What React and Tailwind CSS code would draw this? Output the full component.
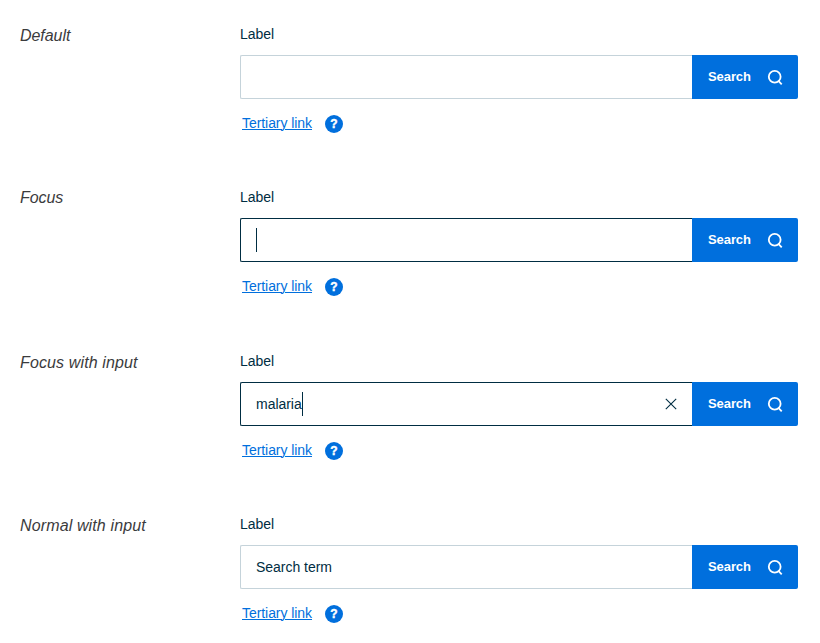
function Row({ title, value, focus, clear, h, titleClass }) {
  return (
    <section className={`flex ${h}`}>
      <h2 className={`w-[220px] shrink-0 text-[16px] leading-[20px] italic text-[#3b3b3d] ${titleClass}`}>{title}</h2>
      <div className="w-[558px]">
        <label className="block h-[30px] text-[14px] leading-[18px] tracking-[-0.05px] text-[#002d42]">Label</label>
        <div className="flex h-[44px]">
          <div className={`flex flex-1 items-center rounded-l-[2px] border border-r-0 pl-[15px] text-[14px] text-[#002d42] ${focus ? "border-[#002d42]" : "border-[#c5d3da]"}`}>
            <span className="tracking-[-0.03px]">{value}</span>
            {focus && <span className="h-6 w-px bg-[#002d42]" />}
            {clear && (
              <svg className="mr-[15px] ml-auto" width="12" height="12" viewBox="0 0 12 12" stroke="#002d42" strokeWidth="1.1">
                <path d="M.8.8 11.2 11.2M11.2.8.8 11.2" />
              </svg>
            )}
          </div>
          <button className="flex w-[106px] items-center rounded-r-[2px] bg-[#006fdd] pl-4 text-[13px] font-bold text-white">
            <span className="w-[59px] text-left tracking-[-0.08px]">Search</span>
            <svg width="18" height="18" viewBox="0 0 18 18" fill="none" stroke="white" strokeWidth="1.8">
              <circle cx="7.7" cy="8.7" r="5.9" />
              <path d="m11.2 12.6 3.5 3.7" />
            </svg>
          </button>
        </div>
        <div className="flex pt-4 pl-[2px]">
          <a className="-mt-px w-[83px] text-[14px] leading-[18px] tracking-[-0.06px] text-[#006fdd] underline decoration-1 underline-offset-1">Tertiary link</a>
          <span className="flex size-[18px] items-center justify-center rounded-full bg-[#006fdd]">
            <span className="text-[12px] leading-[18px] font-bold text-white [-webkit-text-stroke:0.4px_white]">?</span>
          </span>
        </div>
      </div>
    </section>
  );
}

export default function App() {
  return (
    <main className="h-[643px] w-[820px] overflow-hidden bg-white pt-[25px] pl-5 font-['Liberation_Sans',Arial,sans-serif]">
      <Row title="Default" h="h-[163px]" titleClass="pt-px tracking-[-0.05px]" />
      <Row title="Focus" focus h="h-[164px]" titleClass="tracking-[-0.05px]" />
      <Row title="Focus with input" value="malaria" focus clear h="h-[163px]" titleClass="pt-px tracking-[0.13px]" />
      <Row title="Normal with input" value="Search term" h="h-[120px]" titleClass="pt-px tracking-[0.13px]" />
    </main>
  );
}
